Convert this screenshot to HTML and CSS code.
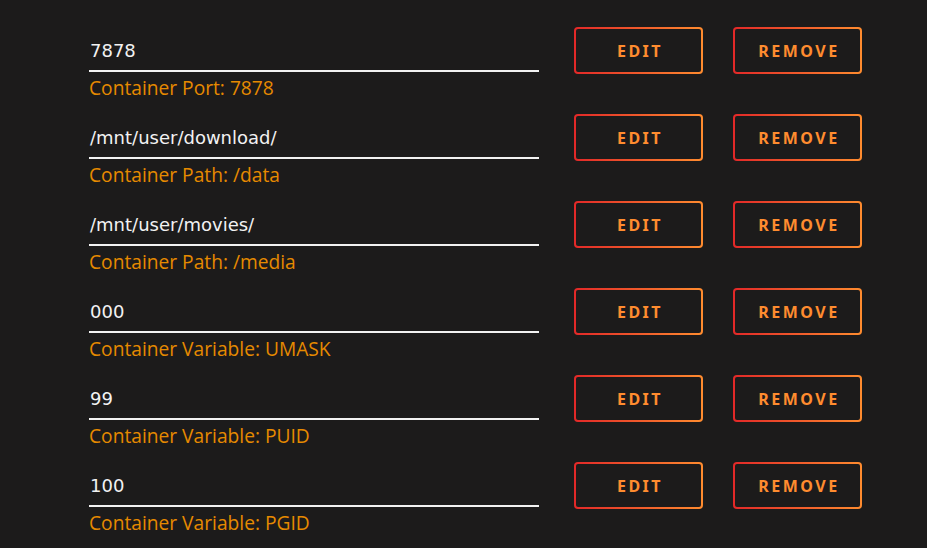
FILE: index.html
```html
<!DOCTYPE html>
<html lang="en">
<head>
  <meta charset="UTF-8">
  <meta name="viewport" content="width=device-width, initial-scale=1.0">
  <title>Container Settings</title>
  <link rel="stylesheet" href="styles.css">
</head>
<body>
  <main class="config-list">
    <div class="config-row">
      <div class="field">
        <div class="field-value">7878</div>
        <div class="field-label">Container Port: 7878</div>
      </div>
      <div class="actions">
        <button class="btn">Edit</button>
        <button class="btn">Remove</button>
      </div>
    </div>

    <div class="config-row">
      <div class="field">
        <div class="field-value">/mnt/user/download/</div>
        <div class="field-label">Container Path: /data</div>
      </div>
      <div class="actions">
        <button class="btn">Edit</button>
        <button class="btn">Remove</button>
      </div>
    </div>

    <div class="config-row">
      <div class="field">
        <div class="field-value">/mnt/user/movies/</div>
        <div class="field-label">Container Path: /media</div>
      </div>
      <div class="actions">
        <button class="btn">Edit</button>
        <button class="btn">Remove</button>
      </div>
    </div>

    <div class="config-row">
      <div class="field">
        <div class="field-value">000</div>
        <div class="field-label">Container Variable: UMASK</div>
      </div>
      <div class="actions">
        <button class="btn">Edit</button>
        <button class="btn">Remove</button>
      </div>
    </div>

    <div class="config-row">
      <div class="field">
        <div class="field-value">99</div>
        <div class="field-label">Container Variable: PUID</div>
      </div>
      <div class="actions">
        <button class="btn">Edit</button>
        <button class="btn">Remove</button>
      </div>
    </div>

    <div class="config-row">
      <div class="field">
        <div class="field-value">100</div>
        <div class="field-label">Container Variable: PGID</div>
      </div>
      <div class="actions">
        <button class="btn">Edit</button>
        <button class="btn">Remove</button>
      </div>
    </div>
  </main>
</body>
</html>
```

FILE: styles.css
```css
body {
  margin: 0;
  padding: 0;
  background-color: #1c1b1b;
  font-family: "DejaVu Sans", sans-serif;
  overflow: hidden;
}

.config-list {
  padding: 27px 0 0 89px;
}

.config-row {
  display: flex;
  align-items: flex-start;
  height: 87px;
}

.field {
  width: 450px;
}

.field-value {
  color: #f2f2f2;
  font-size: 18px;
  line-height: 21px;
  padding: 13px 0 9px 1px;
  border-bottom: 2px solid #f2f2f2;
}

.field-label {
  font-family: "Open Sans", sans-serif;
  color: #e68a00;
  font-size: 19.2px;
  line-height: 23px;
  margin-top: 4px;
}

.actions {
  display: flex;
  gap: 30px;
  margin-left: 35px;
}

.btn {
  width: 129px;
  height: 47px;
  padding: 0 0 0 3px;
  border: 2px solid transparent;
  border-radius: 4px;
  background:
    linear-gradient(#1c1b1b, #1c1b1b) padding-box,
    linear-gradient(90deg, #e22828, #ff8c2f) border-box;
  color: #ff8c2f;
  font-family: "Noto Sans", sans-serif;
  font-weight: bold;
  font-size: 16px;
  letter-spacing: 2.5px;
  text-transform: uppercase;
  cursor: pointer;
}
```
